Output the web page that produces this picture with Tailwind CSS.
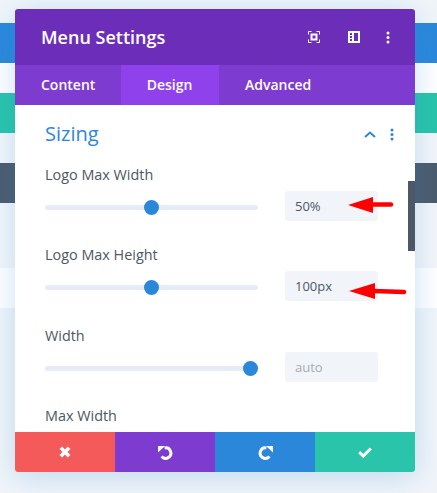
<!DOCTYPE html>
<html><head><meta charset="utf-8">
<script src="https://cdn.jsdelivr.net/npm/@tailwindcss/browser@4"></script>
</head>
<body class="m-0">
<div class="relative w-[437px] h-[493px] overflow-hidden bg-[#f1f5f9] font-['Open_Sans',sans-serif]">
  <!-- page behind the modal -->
  <div class="flex flex-col pt-[23px]">
    <div class="h-10 bg-[#2b87da]"></div>
    <div class="h-[30px] bg-white"></div>
    <div class="h-10 bg-[#29c4a9]"></div>
    <div class="h-[30px] bg-[#f4f6f9]"></div>
    <div class="h-10 bg-[#4c5b6c]"></div>
    <div class="h-[65px] bg-[#f4f6f9]"></div>
    <div class="h-10 bg-white"></div>
  </div>
  <!-- modal -->
  <div class="absolute left-[15px] top-[9px] w-[400px] h-[463px] rounded-[3px] overflow-hidden flex flex-col bg-white shadow-[0_5px_30px_rgba(43,135,218,0.25)]">
    <div class="h-14 shrink-0 bg-[#6c2eb9] flex items-center pl-[26px] pr-[25px]">
      <span class="text-[18px] font-semibold text-white leading-none flex-1">Menu Settings</span>
      <svg class="w-[12px] h-[12px] mr-7" viewBox="0 0 12 12" fill="none" stroke="#fff" stroke-width="1">
        <path d="M.5 3.5v-3h3M8.5 .5h3v3M11.5 8.5v3h-3M3.5 11.5h-3v-3"/>
        <rect x="3.5" y="3.5" width="5" height="5" stroke-width="2"/>
      </svg>
      <svg class="w-[12px] h-[12px] mr-[26px]" viewBox="0 0 12 12"><path fill="#fff" fill-rule="evenodd" d="M0 0h12v12H0zM6 2v8h4V2zM2 2v2h2V2zM2 5v2h2V5zM2 8v2h2V8z"/></svg>
      <svg class="w-[4px] h-[13px]" viewBox="0 0 4 13"><g fill="#fff"><circle cx="2" cy="2" r="1.5"/><circle cx="2" cy="6.5" r="1.5"/><circle cx="2" cy="11" r="1.5"/></g></svg>
    </div>
    <div class="h-10 shrink-0 bg-[#7e3bd0] flex text-[14px] font-semibold text-white">
      <div class="w-[106px] flex items-center pl-[26px] pb-[2px]">Content</div>
      <div class="w-[98px] flex items-center justify-center pr-[1px] pb-[2px] bg-[#8f42ec]">Design</div>
      <div class="flex items-center pl-[26px] pb-[2px]">Advanced</div>
    </div>
    <div class="flex-1 min-h-0 overflow-hidden pl-[30px] pr-[37px] flex flex-col">
      <div class="flex items-center h-[26px] mt-[16px] mr-[-16px] shrink-0">
        <span class="flex-1 text-[20px] text-[#2b87da] leading-none">Sizing</span>
        <svg class="w-[12px] h-[7px] mr-[14px] mt-[1px]" viewBox="0 0 12 7" fill="none" stroke="#2b87da" stroke-width="2"><path d="M1 6l5-4.5L11 6"/></svg>
        <svg class="w-[4px] h-[13px]" viewBox="0 0 4 13"><g fill="#2b87da"><circle cx="2" cy="2" r="1.5"/><circle cx="2" cy="6.5" r="1.5"/><circle cx="2" cy="11" r="1.5"/></g></svg>
      </div>
      <div class="mt-[18px] h-[66px] shrink-0">
        <div class="text-[14.4px] leading-[20px] text-[#4c5866]">Logo Max Width</div>
        <div class="flex items-center mt-[6px] h-[30px]">
          <div class="relative w-[213px] h-[5px] mt-[2px] rounded-full bg-[#e6ecf5] mr-[27px]"><div class="absolute left-[99px] top-[-5px] w-[15px] h-[15px] rounded-full bg-[#2b87da]"></div></div>
          <div class="w-[93px] h-[30px] rounded-[3px] bg-[#f1f5f9] flex items-center pl-[10px] pt-[2px] text-[13px] text-[#4c5866]">50%</div>
        </div>
      </div>
      <div class="mt-[14px] h-[66px] shrink-0">
        <div class="text-[14.4px] leading-[20px] text-[#4c5866]">Logo Max Height</div>
        <div class="flex items-center mt-[6px] h-[30px]">
          <div class="relative w-[213px] h-[5px] mt-[2px] rounded-full bg-[#e6ecf5] mr-[27px]"><div class="absolute left-[99px] top-[-5px] w-[15px] h-[15px] rounded-full bg-[#2b87da]"></div></div>
          <div class="w-[93px] h-[30px] rounded-[3px] bg-[#f1f5f9] flex items-center pl-[10px] pt-[2px] text-[13px] text-[#4c5866]">100px</div>
        </div>
      </div>
      <div class="mt-[15px] h-[66px] shrink-0">
        <div class="text-[14.4px] leading-[20px] text-[#4c5866]">Width</div>
        <div class="flex items-center mt-[6px] h-[30px]">
          <div class="relative w-[213px] h-[5px] mt-[2px] rounded-full bg-[#e6ecf5] mr-[27px]"><div class="absolute left-[198px] top-[-5px] w-[15px] h-[15px] rounded-full bg-[#2b87da]"></div></div>
          <div class="w-[93px] h-[30px] rounded-[3px] bg-[#f1f5f9] flex items-center pl-[10px] pt-[2px] text-[13px] text-[#a3abb5]">auto</div>
        </div>
      </div>
      <div class="mt-[14px] text-[14.4px] leading-[20px] text-[#4c5866] shrink-0">Max Width</div>
    </div>
    <div class="h-10 shrink-0 grid grid-cols-4">
      <div class="bg-[#f45a5a] flex items-center justify-center">
        <svg class="w-3 h-3" viewBox="0 0 12 12" fill="none" stroke="#fff" stroke-width="3.6"><path d="M1.8 1.8l8.4 8.4M10.2 1.8l-8.4 8.4"/></svg>
      </div>
      <div class="bg-[#7e3bd0] flex items-center justify-center">
        <svg class="w-[15px] h-[15px]" viewBox="0 0 15 15" fill="none"><path d="M6.6 3A5.2 5.2 0 1 1 3.6 11.4" stroke="#fff" stroke-width="3"/><path fill="#fff" d="M0 1h7L0 7.5z"/></svg>
      </div>
      <div class="bg-[#2b87da] flex items-center justify-center">
        <svg class="w-[15px] h-[15px]" viewBox="0 0 15 15" fill="none"><path d="M8.4 3A5.2 5.2 0 1 0 11.4 11.4" stroke="#fff" stroke-width="3"/><path fill="#fff" d="M15 1H8l7 6.5z"/></svg>
      </div>
      <div class="bg-[#29c4a9] flex items-center justify-center">
        <svg class="w-[14px] h-[11px]" viewBox="0 0 14 11" fill="none" stroke="#fff" stroke-width="3"><path d="M1.2 5.2l4 3.8L12.8 1.5"/></svg>
      </div>
    </div>
  </div>
  <!-- scrollbar-like dark bar sitting over the modal's edge -->
  <div class="absolute left-[408px] top-[181px] w-[7px] h-[70px] bg-[#4c5866]"></div>
  <!-- red annotation arrows -->
  <svg class="absolute left-[345px] top-[190px] w-[62px] h-[110px]" viewBox="0 0 62 110" fill="none">
    <path fill="#f00" d="M3 15L28 7V23z"/>
    <path stroke="#f00" stroke-width="4.5" stroke-linecap="round" d="M27 14.5H46"/>
    <path fill="#f00" d="M4 101l26-8v16z"/>
    <path stroke="#f00" stroke-width="4.5" stroke-linecap="round" d="M29 101l30 1"/>
  </svg>
</div>
</body></html>
